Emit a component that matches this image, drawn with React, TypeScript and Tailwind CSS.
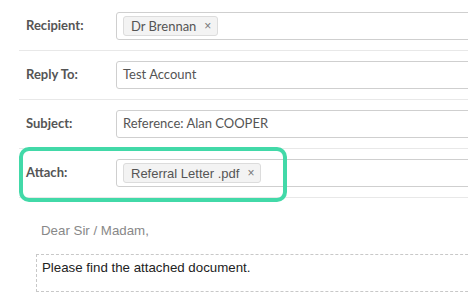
import type { ReactNode } from 'react'

const LATO = "font-['Lato','Open_Sans',sans-serif]"
const ARIAL = "font-['Liberation_Sans','Arial',sans-serif]"

function Chip({ label, sans }: { label: string; sans?: boolean }) {
  return (
    <span className="flex h-[20px] items-center gap-[8px] rounded-[3px] border border-[#dcdcdc] bg-[#f3f3f3] pl-[7px] pr-[6px]">
      <span className={`${sans ? ARIAL : LATO} text-[13px] leading-none text-[#555]`}>{label}</span>
      <span className={`${ARIAL} text-[12px] leading-none text-[#777]`}>×</span>
    </span>
  )
}

function Row({ label, children, highlight }: { label: string; children: ReactNode; highlight?: boolean }) {
  return (
    <div className="relative flex items-center border-b border-[#e8e8e8] py-[10px]">
      <label className={`${LATO} w-[97px] shrink-0 pl-[7px] text-[13px] font-bold text-[#555]`}>{label}</label>
      <div className="flex h-[28px] flex-1 items-center rounded-[3px] border border-[#cfcfcf] bg-white pl-[6px] -mr-[40px]">
        {children}
      </div>
      {highlight && (
        <div className="pointer-events-none absolute -top-[2px] left-0 h-[55px] w-[268px] rounded-[10px] border-4 border-[#42d9a8]" />
      )}
    </div>
  )
}

export default function App() {
  return (
    <div className="h-[299px] w-[468px] overflow-hidden bg-white">
      <div className="ml-[19px] pt-[2px]">
        <Row label="Recipient:">
          <Chip label="Dr Brennan" />
        </Row>
        <Row label="Reply To:">
          <span className={`${LATO} text-[13px] text-[#555]`}>Test Account</span>
        </Row>
        <Row label="Subject:">
          <span className={`${LATO} text-[13px] text-[#555]`}>Reference: Alan COOPER</span>
        </Row>
        <Row label="Attach:" highlight>
          <Chip label="Referral Letter .pdf" sans />
        </Row>
      </div>

      <div className="ml-[36px] pt-[25px]">
        <p className={`${ARIAL} pl-[5px] text-[13.3px] leading-[15px] text-[#888]`}>Dear Sir / Madam,</p>
        <div className="-mr-[40px] mt-[16px] h-[38px] border border-dashed border-[#c8c8c8] pl-[5px] pt-[5px]">
          <p className={`${ARIAL} text-[13.3px] leading-[16px] text-[#222]`}>Please find the attached document.</p>
        </div>
      </div>
    </div>
  )
}
